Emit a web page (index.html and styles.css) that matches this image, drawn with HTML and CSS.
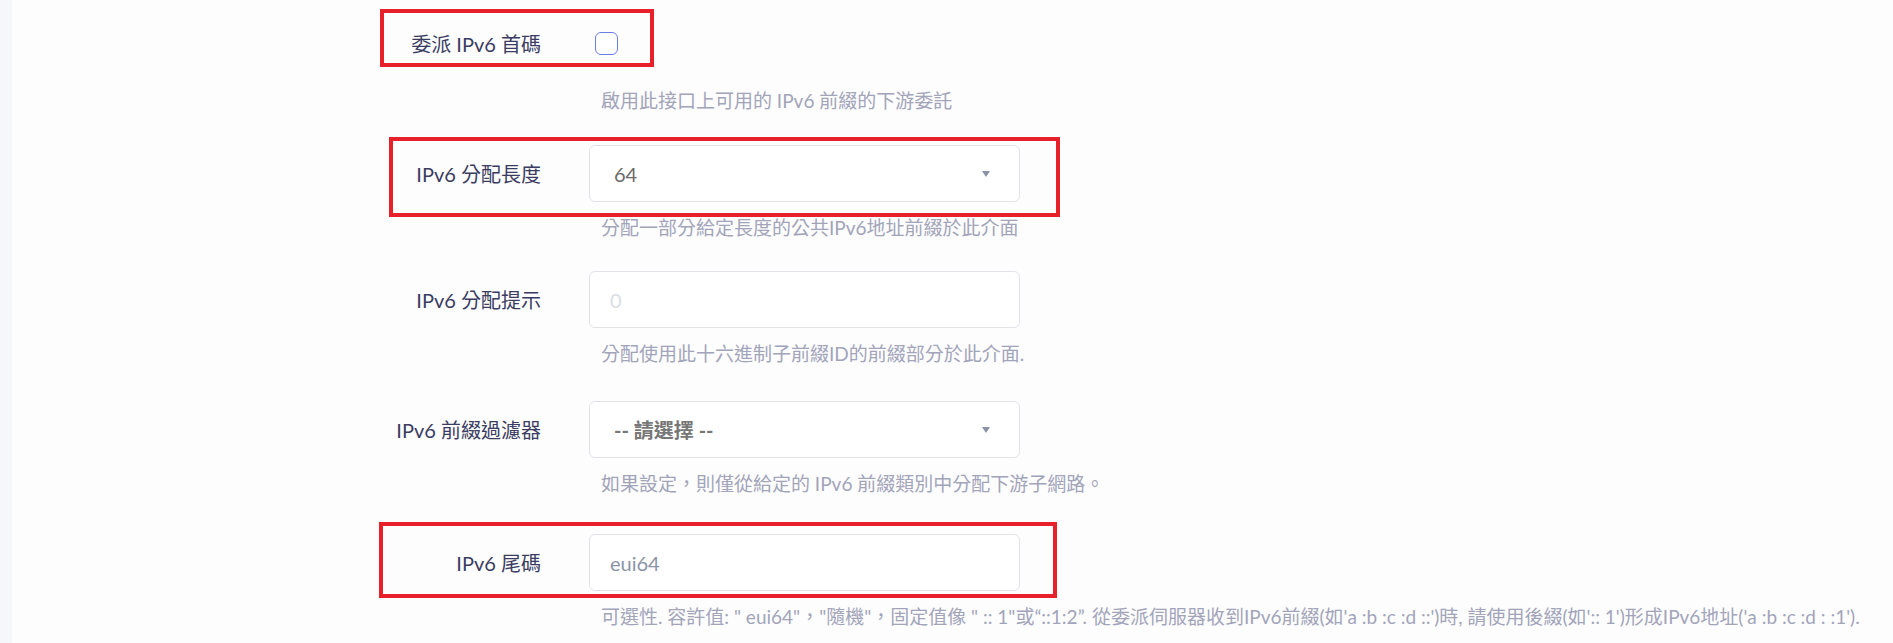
FILE: index.html
```html
<!DOCTYPE html>
<html>
	<head>
		<meta charset="utf-8" />
		<title>IPv6 設定</title>
		<link rel="stylesheet" href="styles.css">
	</head>
	<body>
		<div class="layout">
			<div class="rail"></div>
			<div class="main">
				<div class="field first">
					<label class="field-label">委派 IPv6 首碼</label>
					<div class="field-control">
						<span class="checkbox"></span>
					</div>
					<div class="field-help">啟用此接口上可用的 IPv6 前綴的下游委託</div>
				</div>
				<div class="field short">
					<label class="field-label">IPv6 分配長度</label>
					<div class="field-control">
						<div class="select">64<span class="caret"></span></div>
					</div>
					<div class="field-help">分配一部分給定長度的公共IPv6地址前綴於此介面</div>
				</div>
				<div class="field">
					<label class="field-label">IPv6 分配提示</label>
					<div class="field-control">
						<div class="input placeholder">0</div>
					</div>
					<div class="field-help">分配使用此十六進制子前綴ID的前綴部分於此介面.</div>
				</div>
				<div class="field tall">
					<label class="field-label">IPv6 前綴過濾器</label>
					<div class="field-control">
						<div class="select empty">-- 請選擇 --<span class="caret"></span></div>
					</div>
					<div class="field-help">如果設定，則僅從給定的 IPv6 前綴類別中分配下游子網路。</div>
				</div>
				<div class="field">
					<label class="field-label">IPv6 尾碼</label>
					<div class="field-control">
						<div class="input value">eui64</div>
					</div>
					<div class="field-help">可選性. 容許值: " eui64"，"隨機"，固定值像 " :: 1"或“::1:2”. 從委派伺服器收到IPv6前綴(如'a :b :c :d ::')時, 請使用後綴(如':: 1')形成IPv6地址('a :b :c :d : :1').</div>
				</div>
			</div>
		</div>
		<!-- annotation boxes drawn over the screenshot -->
		<div class="mark" style="left:380px;top:9px;width:274px;height:58px"></div>
		<div class="mark" style="left:389px;top:137px;width:671px;height:80px"></div>
		<div class="mark" style="left:379px;top:522px;width:678px;height:76px"></div>
	</body>
</html>
```
FILE: styles.css
```css
body {
	margin: 0;
	background: #fdfdfd;
	font-family: "Lato", "Noto Sans CJK TC", sans-serif;
	color: #3a3c62;
}

.layout {
	display: flex;
	min-height: 643px;
}

.rail {
	width: 12px;
	background: #f6f7f8;
	flex: none;
}

.main {
	flex: 1;
	padding: 15px 0 0 329px;
}

.field {
	display: grid;
	grid-template-columns: 200px 431px;
	column-gap: 48px;
	margin-bottom: 34px;
}

.field.first {
	margin-bottom: 31px;
}

.field.first .field-help {
	margin-top: 16px;
}

.field.short {
	margin-bottom: 30px;
}

.field.tall {
	margin-bottom: 37px;
}

.field-label {
	display: flex;
	align-items: center;
	justify-content: flex-end;
	height: 57px;
	font-size: 20px;
	font-weight: 400;
	color: #3a3c62;
}

.field-control {
	display: flex;
	align-items: center;
	height: 57px;
}

.field-help {
	grid-column: 2;
	margin: 13px 0 0 12px;
	line-height: 26px;
	font-size: 19px;
	color: #a2a4ba;
	white-space: nowrap;
}

.checkbox {
	width: 21px;
	height: 21px;
	margin-left: 6px;
	border: 1.5px solid #6a7de6;
	border-radius: 6px;
	background: #fff;
}

.select,
.input {
	box-sizing: border-box;
	width: 100%;
	height: 57px;
	display: flex;
	align-items: center;
	border: 1px solid #e0e3e8;
	border-radius: 6px;
	background: #fff;
	font-size: 20px;
}

.select {
	position: relative;
	padding-left: 24px;
	color: #6b6b6b;
}

.select.empty {
	font-weight: bold;
	color: #777;
}

.caret {
	position: absolute;
	right: 29px;
	top: 25px;
	border-left: 4.5px solid transparent;
	border-right: 4.5px solid transparent;
	border-top: 6px solid #8a94a6;
}

.input {
	padding-left: 20px;
}

.input.placeholder {
	color: #d9dde5;
}

.input.value {
	color: #8a94a6;
}

.mark {
	position: absolute;
	box-sizing: border-box;
	border: 4px solid #e8202a;
}
```
